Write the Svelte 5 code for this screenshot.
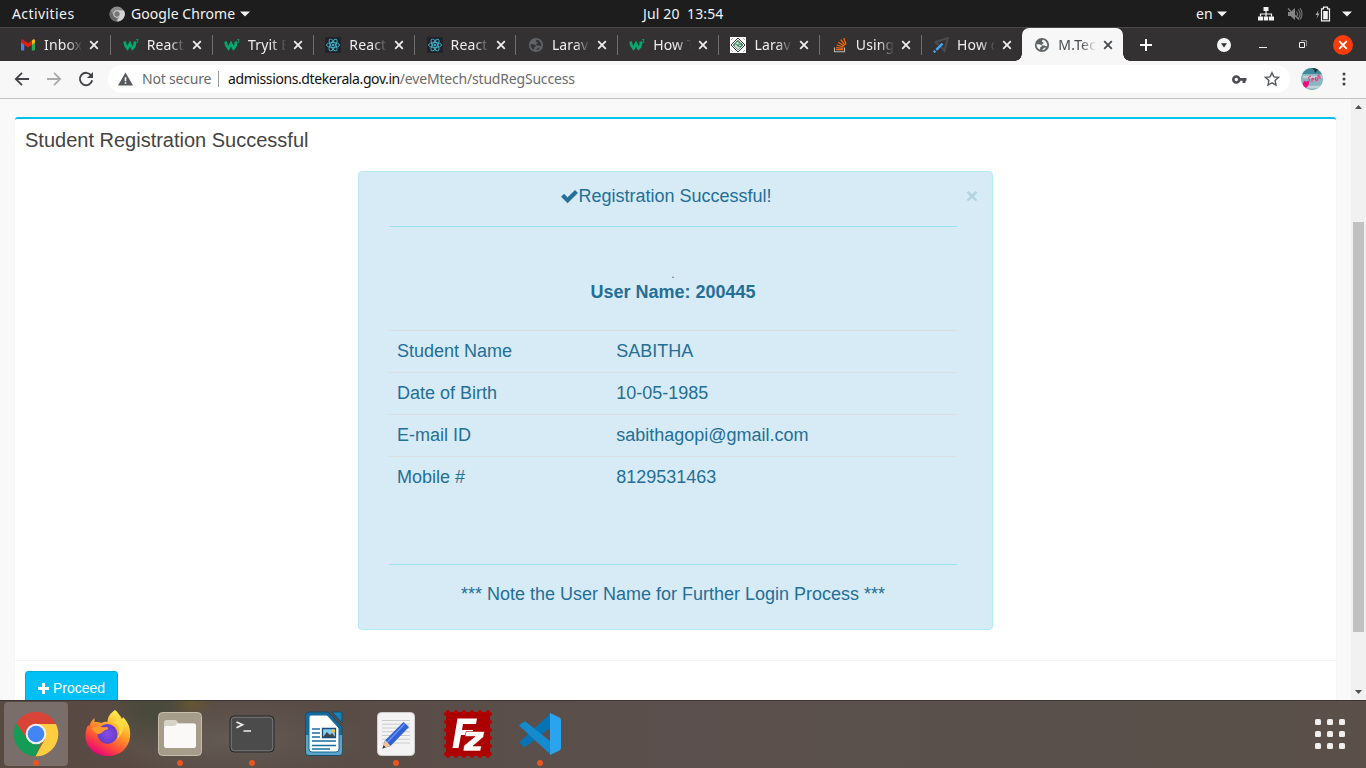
<script>
  const tabs = [
    { icon: 'gmail', title: 'Inbox (' },
    { icon: 'w3', title: 'React' },
    { icon: 'w3', title: 'Tryit E' },
    { icon: 'react', title: 'React' },
    { icon: 'react', title: 'React' },
    { icon: 'globe', title: 'Larav' },
    { icon: 'w3', title: 'How T' },
    { icon: 'diamond', title: 'Larav' },
    { icon: 'stack', title: 'Using' },
    { icon: 'plane', title: 'How d' },
    { icon: 'globe', title: 'M.Tec', active: true }
  ];
  const rows = [
    ['Student Name', 'SABITHA'],
    ['Date of Birth', '10-05-1985'],
    ['E-mail ID', 'sabithagopi@gmail.com'],
    ['Mobile #', '8129531463']
  ];
  const apps = [
    { id: 'chrome', running: true, focused: true },
    { id: 'firefox' },
    { id: 'files', running: true },
    { id: 'terminal', running: true },
    { id: 'writer' },
    { id: 'editor', running: true },
    { id: 'filezilla' },
    { id: 'vscode', running: true }
  ];
  const teeth = [0, 1, 2, 3, 4, 5];
</script>

{#snippet cross(color)}
  <svg class="cross" width="10" height="10" viewBox="0 0 10 10"><path d="M1.2 1.2 8.8 8.8M8.8 1.2 1.2 8.8" stroke={color} stroke-width="1.8" /></svg>
{/snippet}

{#snippet favicon(kind, active)}
  <svg class="fav" width="16" height="16" viewBox="0 0 16 16">
    {#if kind === 'gmail'}
      <path d="M1 4v8.6c0 .5.4.9.9.9h2.3V7z" fill="#4285f4" />
      <path d="M15 4v8.6c0 .5-.4.9-.9.9h-2.3V7z" fill="#34a853" />
      <path d="M11.8 3.4 13 2.6c1-.7 2 0 2 1.3v1.5l-3.2 2.3z" fill="#fbbc04" />
      <path d="M4.2 3.4 3 2.6C2 1.900 1 2.600 1 3.900v1.500l3.200 2.300z" fill="#c5221f" />
      <path d="M4.200 3.400 8 6.300l3.800-2.900v4.300L8 10.600 4.200 7.700z" fill="#ea1c0d" />
    {:else if kind === 'w3'}
      <path d="M1.500 4.500C2 8 3 10 4.500 11.500L7 6.500 9.500 11.500C11.300 10 12.200 7.500 11.700 4.500" fill="none" stroke="#04aa6d" stroke-width="2.700" />
      <path d="M13.200 2.500h1.900l-1 1.400c1.700.2 1.300 2.200-1 1.600" fill="none" stroke="#04aa6d" stroke-width=".9" />
    {:else if kind === 'react'}
      <rect width="16" height="16" rx="1" fill="#20232a" />
      <g fill="none" stroke="#40b5cf" stroke-width=".9">
        <ellipse cx="8" cy="8" rx="6.500" ry="2.500" />
        <ellipse cx="8" cy="8" rx="6.500" ry="2.500" transform="rotate(60 8 8)" />
        <ellipse cx="8" cy="8" rx="6.500" ry="2.500" transform="rotate(120 8 8)" />
      </g>
      <circle cx="8" cy="8" r="1.200" fill="#40b5cf" />
    {:else if kind === 'globe'}
      <circle cx="8" cy="8" r="7.100" fill="#5f6368" />
      <path d="M9.200 2.700C8 3.200 7.600 4 8 4.700c.5.700 1.500.3 1.600 1.200 0 .9-1.500.8-1.600 1.900 0 .7.8 1 1.600.8.900-.3 1.600-.3 2.300.5l1.300.4c.5-3-1-5.800-4-6.800zM2.500 7.300c2-.3 3.600-.2 4.800.6 1 .7.700 1.600-.2 1.900-.8.300-1 .8-.9 1.500l-.1 1.500C4 12 2.500 10 2.500 7.300z" fill={active ? '#f7f7f7' : '#333132'} />
      <path d="M8.200 13.200c.2-1.300 1-1.300 1.500-2 .3-.5 1.200-.8 2.200-.4-.8 1.400-2 2.200-3.700 2.400z" fill={active ? '#f7f7f7' : '#333132'} />
    {:else if kind === 'diamond'}
      <rect width="16" height="16" fill="#fff" />
      <path d="M8 1 15 8 8 15 1 8z" fill="none" stroke="#333" />
      <path d="M8 3 13 8 8 13 3 8z" fill="#c8d8cf" stroke="#56675e" stroke-width=".7" />
      <path d="M4 9c1-3 2-3 3-1s2 0 1-1M9 7h3c-.5 3-2 3-4 2M6 5c2-1 3 0 4 1" fill="none" stroke="#187447" stroke-width="1" />
      <path d="M1 3 3 1M13 1l2 2M1 13l2 2M15 13l-2 2" stroke="#999" stroke-width=".8" />
    {:else if kind === 'stack'}
      <path d="M2.500 10.500v4.200h10v-4.200" fill="none" stroke="#bcbbbb" stroke-width="1.100" />
      <path d="M4 12.700h7M4.200 10.600l6.900.7M4.800 8l6.600 2M6.300 5.200l5.900 3.800M8.700 2.700l4.300 5.500M11.700 1.100l2.400 6.500" stroke="#f56a0a" stroke-width="1.300" />
    {:else}
      <path d="M1.500 5.500 14.800 1 11.500 14 8.500 10M2 5.500l4 2.300" fill="none" stroke="#4b4c50" stroke-width="2" />
      <path d="M.8 15.300 2.300 13.800M3.300 12.800 9.500 6.700" stroke="#4aa5f5" stroke-width="2.500" />
    {/if}
  </svg>
{/snippet}

<div class="desktop">
  <header class="topbar">
    <span class="activities">Activities</span>
    <div class="appmenu">
      <svg width="16" height="16" viewBox="0 0 16 16"><circle cx="8" cy="8" r="7.500" fill="#8b8b8b" /><path d="M8 4.500h7A7.500 7.500 0 0 1 8 15.500L11 9z" fill="#d2d2d2" /><path d="M1.500 4.300 5 10l3 1.500-1 4A7.500 7.500 0 0 1 1.500 4.300z" fill="#686868" /><circle cx="8" cy="8" r="3.300" fill="#777" stroke="#ddd" stroke-width=".9" /></svg>
      <span class="chrome-label">Google Chrome</span>
      <svg width="10" height="6" viewBox="0 0 10 6"><path d="M0 .5h10L5 5.500z" fill="#f2f2f2" /></svg>
    </div>
    <span class="clock">Jul 20&nbsp; 13:54</span>
    <div class="status">
      <span class="lang">en</span>
      <svg class="caret" width="10" height="6" viewBox="0 0 10 6"><path d="M0 .5h10L5 5.500z" fill="#f2f2f2" /></svg>
      <svg class="net" width="16" height="14" viewBox="0 0 16 14"><path d="M5.500 0h5v4h-5zM0 9.500h5v4H0zM5.800 9.500h4.400v4H5.800zM11 9.500h5v4h-5z" fill="#f2f2f2" /><path d="M8 4v5.500M2.500 9.500V7h11v2.500" fill="none" stroke="#f2f2f2" stroke-width="1.200" /></svg>
      <svg class="vol" width="16" height="14" viewBox="0 0 16 14"><path d="M1 5h2.500L8 1v12L3.500 9H1z" fill="#858585" /><path d="M9.500 4.500q2 2.500 0 5M11.300 2.500q3.500 4.500 0 9M13 1q4 6 0 11.500" fill="none" stroke="#777" stroke-width="1.100" /><path d="M1 1.500 12 12.500" stroke="#858585" stroke-width="1.300" /></svg>
      <svg class="bat" width="16" height="16" viewBox="0 0 16 16"><path d="M3.600 4 .5 9h2l-1 4 3-5.500H2.700z" fill="#aaa" /><path d="M8.500 1.200h4V2.800h2v12H6.500v-12h2z" fill="none" stroke="#f2f2f2" stroke-width="1.200" /><path d="M8.200 5h4.600v8.300H8.200z" fill="#f2f2f2" /></svg>
      <svg width="10" height="6" viewBox="0 0 10 6"><path d="M0 .5h10L5 5.500z" fill="#f2f2f2" /></svg>
    </div>
  </header>

  <nav class="tabstrip">
    {#each tabs as tab, i}
      <div class="tab" class:active={tab.active} class:first={i === 0}>
        {@render favicon(tab.icon, tab.active)}
        <span class="title">{tab.title}</span>
        {@render cross(tab.active ? '#45484c' : '#eee')}
      </div>
    {/each}
    <div class="window-tools">
      <svg width="12" height="12" viewBox="0 0 12 12"><path d="M6 0v12M0 6h12" stroke="#fff" stroke-width="2" /></svg>
      <svg class="drop" width="14" height="14" viewBox="0 0 14 14"><circle cx="7" cy="7" r="7" fill="#f7f7f7" /><path d="M4 5.300h6L7 9.500z" fill="#333132" /></svg>
      <svg class="min" width="8" height="14" viewBox="0 0 8 14"><path d="M0 9.500h8" stroke="#eee" /></svg>
      <svg class="max" width="9" height="9" viewBox="0 0 9 9"><path d="M1.500 2.500h5v5h-5z" fill="none" stroke="#f5f5f5" /><path d="M3 .5h5.500V6" fill="none" stroke="#8c8c8c" /></svg>
      <span class="win-close">{@render cross('#fff')}</span>
    </div>
  </nav>

  <div class="toolbar">
    <svg class="nav" width="16" height="16" viewBox="0 0 16 16"><path d="M15 8H2M8 1.800 1.800 8 8 14.200" fill="none" stroke="#414347" stroke-width="1.800" /></svg>
    <svg class="nav" width="16" height="16" viewBox="0 0 16 16"><path d="M1 8h13M8 1.800 14.200 8 8 14.200" fill="none" stroke="#aaa" stroke-width="1.800" /></svg>
    <svg class="nav" width="16" height="16" viewBox="0 0 16 16"><path d="M13.300 4.600A6.200 6.200 0 1 0 14.200 9.300" fill="none" stroke="#414347" stroke-width="1.900" /><path d="M15 1v6H9z" fill="#414347" /></svg>
    <div class="omnibox">
      <svg width="15" height="14" viewBox="0 0 15 14"><path d="M7.500.5 15 13.500H0z" fill="#55585d" /><path d="M7.500 5.200v4M7.500 10.200v1.600" stroke="#fff" stroke-width="1.600" /></svg>
      <span class="insecure">Not secure</span>
      <span class="divider"></span>
      <span class="url"><b>admissions.dtekerala.gov.in</b><i>/eveMtech/studRegSuccess</i></span>
      <svg class="key" width="15" height="9" viewBox="0 0 15 9"><circle cx="4.300" cy="4.500" r="3" fill="none" stroke="#4b4d51" stroke-width="2.600" /><path d="M7 3h7.500v2.700H13.500V8h-2.900V5.700H7z" fill="#4b4d51" /></svg>
      <svg width="16" height="16" viewBox="0 0 16 16"><path d="m8 1.700 1.900 4.200 4.600.5-3.400 3.100.9 4.600-4-2.300-4 2.300.9-4.600L1.500 6.400l4.600-.5z" fill="none" stroke="#55585d" stroke-width="1.400" /></svg>
    </div>
    <svg class="avatar" width="22" height="22" viewBox="0 0 22 22"><defs><clipPath id="round"><circle cx="11" cy="11" r="11" /></clipPath></defs><g clip-path="url(#round)"><rect width="22" height="22" fill="#8bb5c1" /><path d="M0 0h22v6H0z" fill="#3f8b9d" /><path d="M11 0h7l-2 3-2 2-1-3z" fill="#26333c" /><path d="M2 9h20M0 19h22" stroke="#bed2d8" stroke-width="2.500" /><path d="M10 8q-4 1-2 3t-1 3M11 14v-4q3 0 1 2M14 12q2-3 1-3t0 3 2-2V7M18 10V6M19 8v3" fill="none" stroke="#ef2f77" stroke-width="1" /><path d="M2 15q2-4 3-1q3-3 3 0q0 4-3 6q-4-2-3-5" fill="#fa087d" /></g></svg>
    <svg class="dots" width="4" height="14" viewBox="0 0 4 14"><circle cx="2" cy="2" r="1.500" fill="#414347" /><circle cx="2" cy="7" r="1.500" fill="#414347" /><circle cx="2" cy="12" r="1.500" fill="#414347" /></svg>
  </div>

  <div class="viewport">
    <main class="page">
      <section class="box">
        <h3>Student Registration Successful</h3>
        <div class="alert">
          <button class="dismiss" aria-label="Close">×</button>
          <div class="alert-body">
            <h4><svg width="17" height="14" viewBox="0 0 17 14"><path d="M.3 6.800 3 4.100l3.600 3.500L14 .2l2.700 2.700L6.600 13z" fill="#256e96" stroke="#256e96" stroke-width=".4" stroke-linejoin="round" /></svg>Registration Successful!</h4>
            <hr />
            <div class="user"><small>.</small><strong>User Name: 200445</strong></div>
            <div class="table">
              {#each rows as [label, value]}
                <div class="row"><span>{label}</span><span>{value}</span></div>
              {/each}
            </div>
            <hr />
            <p>*** Note the User Name for Further Login Process ***</p>
          </div>
        </div>
        <footer>
          <button class="proceed"><svg width="11" height="11" viewBox="0 0 11 11"><path d="M5.500 0v11M0 5.500h11" stroke="#fff" stroke-width="3" /></svg>Proceed</button>
        </footer>
      </section>
    </main>
    <div class="scrollbar">
      <svg width="7" height="4" viewBox="0 0 7 4"><path d="M0 4h7L3.500 0z" fill="#505050" /></svg>
      <div class="thumb"></div>
      <svg width="7" height="4" viewBox="0 0 7 4"><path d="M0 0h7L3.500 4z" fill="#505050" /></svg>
    </div>
  </div>

  <div class="dock">
    {#each apps as app}
      <div class="slot" class:focused={app.focused}>
        <svg width="48" height="48" viewBox="0 0 48 48">
          {#if app.id === 'chrome'}
            <circle cx="24" cy="24" r="22.300" fill="#da4437" />
            <path d="M24 14h19.900A22.300 22.300 0 0 1 23.500 46.300L33 29z" fill="#ffcd40" />
            <path d="M4.300 13.500 15.300 29 24 34l5.500-1.500-6 13.800A22.300 22.300 0 0 1 4.300 13.500z" fill="#149b56" />
            <circle cx="24" cy="24" r="10.300" fill="#f1f1f1" /><circle cx="24" cy="24" r="8.300" fill="#4285f4" />
          {:else if app.id === 'firefox'}
            <defs>
              <linearGradient id="fx" x1=".8" y1=".1" x2=".3" y2="1"><stop offset="0" stop-color="#fff44f" /><stop offset=".35" stop-color="#ffa52a" /><stop offset=".7" stop-color="#ff4b38" /><stop offset="1" stop-color="#e5007e" /></linearGradient>
              <radialGradient id="fp"><stop offset="0" stop-color="#854bea" /><stop offset="1" stop-color="#653dc7" /></radialGradient>
            </defs>
            <path d="M31 0c3 2 5 6 6 9 1 0 2-1 2-2 5 5 8 11 7 20-1 11-10 19-22 19S1 38 1.500 25c.2-4 1-8 3-10l.5 2c1-4 3-7 5.500-9v4c3 0 5 0 7 1 2-1 4-1.500 6-1 0-5 3-9 7.500-12z" fill="url(#fx)" />
            <circle cx="23.500" cy="24" r="10" fill="url(#fp)" />
            <path d="M7.500 18c6-2 10 0 15.500-1 2 1 1 3-2 3-3 2-4 4-7 4-3-1-5-3-6.500-6z" fill="#ff9a2a" />
            <path d="M31 1c3 6 2 11-4 12 10-1 9 11 6 16 9-7 9-21-2-28z" fill="#ffde43" opacity=".85" />
          {:else if app.id === 'files'}
            <rect x="2.500" y="2.500" width="43" height="43" rx="4" fill="#a59d89" stroke="#c7bfac" />
            <path d="M8 12.500Q8 10 10.500 10h9q1.500 0 3 3.500h15q2.500 0 2.500 2.500v9H8z" fill="#d9d3c7" /><path d="M8 18q0-2 2-2h8q1.500 0 3-2.500h17q2 0 2 2V36q0 2-2 2H10q-2 0-2-2z" fill="#faf9f7" />
          {:else if app.id === 'terminal'}
            <rect x="2" y="6" width="44" height="36" rx="4" fill="#4b4b4b" stroke="#292929" /><rect x="3.300" y="7.300" width="41.400" height="33.400" rx="3" fill="none" stroke="#777" />
            <path d="m8.500 12 6 2.700-6 3M15.500 21h7.500" fill="none" stroke="#eee" stroke-width="1.700" />
          {:else if app.id === 'writer'}
            <path d="M9 2h19l14 15v25q0 3.500-3.500 3.500h-30Q5.500 45.500 5.500 42V5.500Q5.500 2 9 2z" fill="#176c9f" stroke="#164c6c" />
            <path d="M6 25h36v17q0 3-3 3H9q-3 0-3-3z" fill="#5ba5cb" /><path d="M11 5h16l12 13v21q0 3-3 3H12q-3 0-3-3V7q0-2 2-2z" fill="#fff" stroke="#126796" />
            <path d="M32 2h8.500q1.500 0 1.500 2v9z" fill="#1684ba" stroke="#164c6c" />
            <path d="M12 19h8M12 23h8M12 27h8M12 31h24M12 35.500h24M12 39h18" stroke="#176da0" stroke-width="1.700" />
            <path d="M22.500 18.500h13v9h-13z" fill="#85cdf0" stroke="#164e79" stroke-width="1.300" /><path d="m23 27 4-5 3 3 2-2 3 4z" fill="#41474a" /><circle cx="33.500" cy="21" r="1.700" fill="#ffbe31" />
          {:else if app.id === 'editor'}
            <rect x="5.500" y="2.500" width="37" height="43" rx="4" fill="#f3f3f3" stroke="#cecece" />
            <path d="M10 10.500h28M10 14.200h28M10 18h28M10 21.700h28M10 25.500h28M10 29.200h28M10 33h28" stroke="#cbcbcb" />
            <path d="m10.500 38.500 2.500-8L31.500 12l5.500 5L18.500 36z" fill="#315fd4" /><path d="m14.500 33 18-19" stroke="#6992f3" stroke-width="1.500" /><path d="m10.500 38.500 2.700-8.200 5.400 5.500z" fill="#f1c596" /><path d="m10.500 38.500 1-3.200 2.200 2z" fill="#303030" />
          {:else if app.id === 'filezilla'}
            <rect x="2" y="2" width="44" height="44" fill="#ac0000" />
            {#each teeth as n}
              <g fill="#b80000"><circle cx={4 + n * 8} cy="2" r="2" /><circle cx={4 + n * 8} cy="46" r="2" /><circle cx="2" cy={4 + n * 8} r="2" /><circle cx="46" cy={4 + n * 8} r="2" /></g>
            {/each}
            <path d="M8.500 38 13.500 8.500H33L32 14H19L18 20h11l-1 5H17l-2.500 13z" fill="#fff" />
            <path d="M22 21.500H40.500l-1 5.500-10.500 9H37.500l-1 5H19l1-5.500L31 26.500H21z" fill="#fff" stroke="#ac0000" stroke-width=".6" />
          {:else}
            <path d="M3.500 32 34 4v14L10 36.500q-1 1-2.500 0l-3.500-3q-1-.8-.5-1.500z" fill="#0673b5" />
            <path d="M3.500 16 34 44V31L10 12q-1-1-2.500 0L4 14.500q-1 .7-.5 1.500z" fill="#158bcf" />
            <path d="M34 3v42L33 44l1-7V11l-1-7z" fill="#087bc0" /><path d="m34 3 9 4.300q2 1 2 3.200v27q0 2.200-2 3.200L34 45z" fill="#2ba4ef" />
          {/if}
        </svg>
        {#if app.running}<span class="running"></span>{/if}
      </div>
    {/each}
    <div class="launcher">{#each Array(9) as _}<span></span>{/each}</div>
  </div>
</div>

<style>
  :global(body) { margin: 0; overflow: hidden; }
  * { box-sizing: border-box; }
  svg { display: block; flex: none; }
  button { font: inherit; border: 0; padding: 0; }
  .desktop { width: 1366px; height: 768px; display: flex; flex-direction: column; overflow: hidden; font: 14px/20px "Noto Sans", sans-serif; }

  .topbar { height: 27px; flex: none; display: grid; grid-template-columns: 109px 534px 82px 1fr; align-items: center; background: #1d1d1d; color: #f2f2f2; white-space: nowrap; }
  .activities { padding-left: 12px; letter-spacing: .42px; }
  .appmenu { display: flex; align-items: center; }
  .chrome-label { width: 104px; margin: 0 5px 0 6px; letter-spacing: .06px; }
  .clock { letter-spacing: .13px; }
  .status { display: flex; align-items: center; padding-left: 471px; }
  .lang { width: 17px; }
  .caret { margin-left: 4px; }
  .net { margin-left: 31px; }
  .vol { margin-left: 13px; }
  .bat { margin: 0 11px 0 12px; }

  .tabstrip { height: 34px; flex: none; display: flex; align-items: stretch; padding-left: 9px; background: #333132; border-top: 1px solid #494748; color: #eee; }
  .tab { width: 101.300px; flex: none; display: flex; align-items: center; padding-left: 12.400px; position: relative; }
  .tab.first { padding-left: 11px; }
  .tab:not(.first):not(.active)::before { content: ""; position: absolute; left: 0; top: 7px; width: 1px; height: 20px; background: #717071; }
  .title { width: 39px; margin: 0 6px 0 8px; overflow: hidden; white-space: nowrap; letter-spacing: .15px; mask-image: linear-gradient(90deg, #000 60%, transparent 98%); }
  .tab.active { background: #f7f7f7; color: #45484c; border-radius: 7px 7px 0 0; }
  .tab.active::before, .tab.active::after { content: ""; position: absolute; bottom: 0; width: 7px; height: 7px; }
  .tab.active::before { left: -7px; background: radial-gradient(circle at 0 0, transparent 6.500px, #f7f7f7 7px); }
  .tab.active::after { right: -7px; background: radial-gradient(circle at 100% 0, transparent 6.500px, #f7f7f7 7px); }
  .window-tools { display: flex; align-items: center; padding-left: 16.700px; }
  .drop { margin-left: 65px; }
  .min { margin-left: 28px; }
  .max { margin-left: 31px; }
  .win-close { width: 20px; height: 20px; margin-left: 26px; border-radius: 50%; background: #fa3c0a; display: grid; place-items: center; }

  .toolbar { height: 38px; flex: none; display: flex; align-items: center; padding: 0 0 1px 14px; background: #f7f7f7; border-bottom: 1px solid #c1c1c1; }
  .nav { margin-right: 16px; }
  .omnibox { width: 1182px; height: 28px; margin-left: -2px; padding: 0 10px; border-radius: 14px; background: #fff; display: flex; align-items: center; white-space: nowrap; }
  .insecure { width: 69px; margin-left: 9px; color: #66696d; letter-spacing: -.2px; }
  .divider { width: 1px; height: 16px; margin: 0 9px 0 7px; background: #999; }
  .url { flex: 1; }
  .url b { color: #111; font-weight: 400; letter-spacing: -.4px; }
  .url i { color: #6b6b6b; font-style: normal; letter-spacing: -.19px; }
  .key { margin-right: 17px; }
  .avatar { margin-left: 11px; }
  .dots { margin-left: 19px; }

  .viewport { height: 601px; flex: none; display: flex; background: #f9f9f9; }
  .page { width: 1351px; height: 601px; padding: 18px 15px 0; overflow: hidden; font: 14px/20px "Liberation Sans", Arial, sans-serif; }
  .box { width: 1321px; height: 620px; border-top: 2px solid #00c0ef; border-radius: 3px; background: #fff; box-shadow: 0 1px 1px rgba(0,0,0,.12); }
  h3 { margin: 0; padding: 10px 10px 0; font-weight: 400; font-size: 20px; line-height: 22px; color: #444; }
  .alert { width: 635px; height: 459px; margin: 20px auto 0; padding: 15px 35px 0 30px; border: 1px solid #b4ebf2; border-radius: 4px; background: #d6ebf6; color: #256e96; position: relative; font-size: 18px; }
  .dismiss { position: absolute; right: 14px; top: 13px; font: bold 21px/21px "Liberation Sans", Arial, sans-serif; background: none; color: #b3d3e2; }
  h4 { height: 19px; margin: 0; display: flex; justify-content: center; align-items: center; font-size: 18px; line-height: 19px; font-weight: 400; padding-right: 13px; }
  hr { height: 1px; margin: 20px 0 0; border: 0; background: #99e3ed; }
  .user { height: 103px; padding-top: 40px; display: flex; flex-direction: column; align-items: center; }
  small { height: 15px; font-size: 12px; line-height: 15px; }
  strong { line-height: 20px; }
  .row { display: grid; grid-template-columns: 219.200px 1fr; height: 42px; padding: 0 8px; border-top: 1px solid #dcdde0; line-height: 41px; }
  .table + hr { margin-top: 66px; }
  p { margin: 19px 0 0; text-align: center; line-height: 20px; }
  footer { height: 60px; margin-top: 30px; padding: 10px; border-top: 1px solid #f4f4f4; }
  .proceed { width: 93px; height: 34px; display: flex; align-items: center; justify-content: center; gap: 4px; border: 1px solid #00acd6; border-radius: 3px; background: #00c0f5; color: #fff; }
  .scrollbar { width: 15px; display: flex; flex-direction: column; align-items: center; padding: 6px 0; background: #f1f1f1; }
  .thumb { width: 11px; height: 410px; margin: 113px 0 auto; background: #c1c1c1; }

  .dock { height: 68px; display: flex; align-items: flex-start; gap: 8px; padding: 1px 4px 0; border-top: 1px solid #3d3533; background: radial-gradient(ellipse 40px 50px at 152px 0, #494a3b 30%, transparent), radial-gradient(ellipse 25px 18px at 190px 0, #68572f, transparent), radial-gradient(ellipse 140px 40px at 230px 38px, #625b53, transparent), linear-gradient(90deg, #584941, #5b504d 50%, #5a5049); }
  .slot { width: 64px; height: 64px; display: grid; place-items: center; border-radius: 4px; position: relative; }
  .focused { background: #796e6a; }
  .running { position: absolute; left: 29px; bottom: 0; width: 6px; height: 6px; border-radius: 50%; background: #e95420; }
  .launcher { display: grid; grid-template-columns: repeat(3, 6px); gap: 6px; margin: 17px 17px 0 auto; }
  .launcher span { height: 6px; border-radius: 1.500px; background: #eeeeec; }
</style>
